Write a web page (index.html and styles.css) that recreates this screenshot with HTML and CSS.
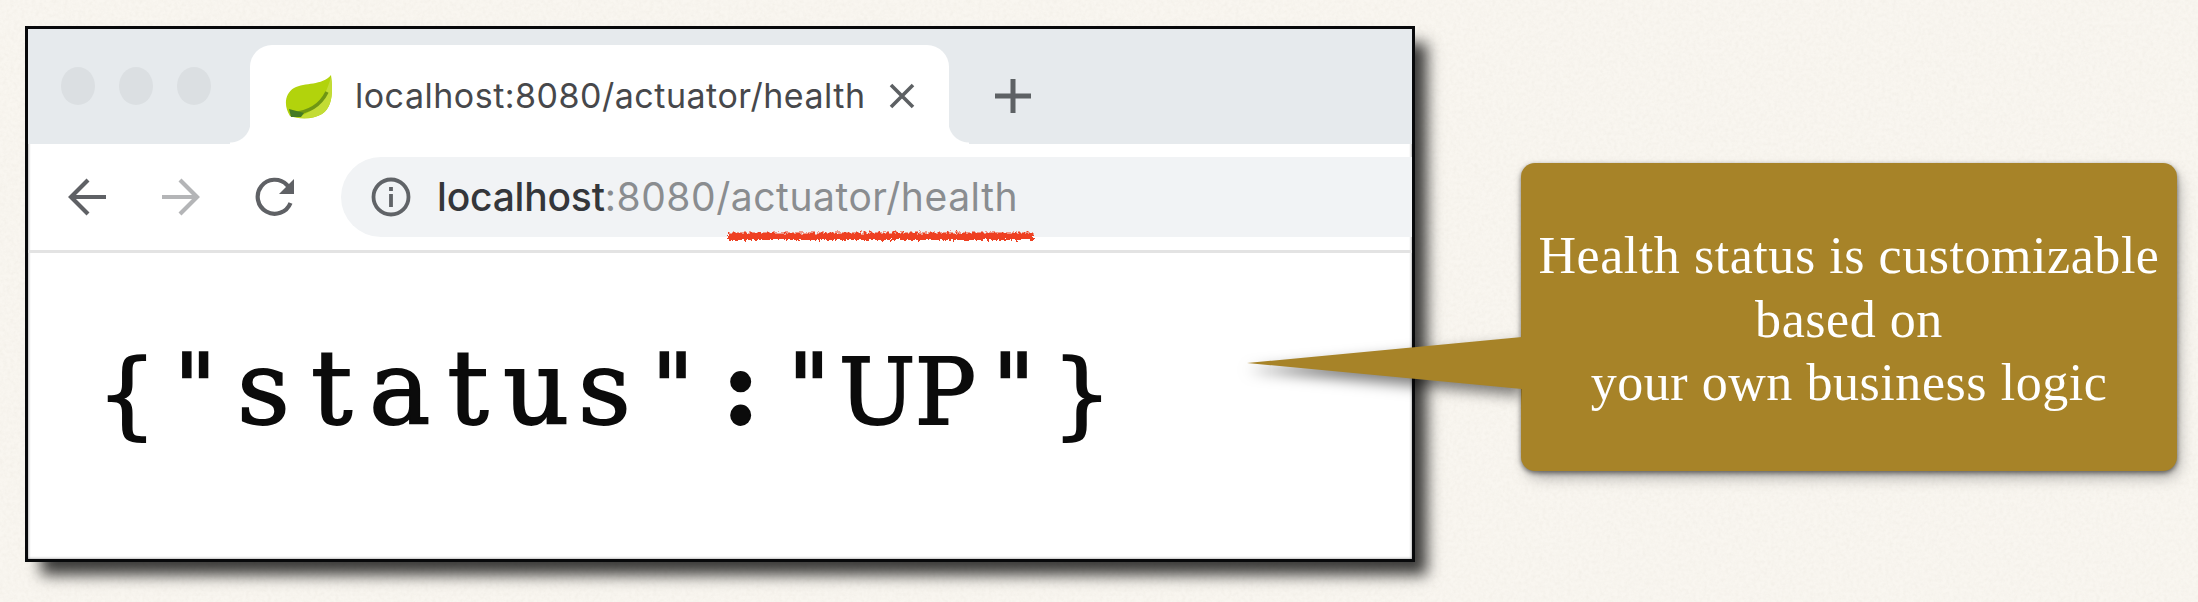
FILE: index.html
```html
<!DOCTYPE html>
<html lang="en">
<head>
<meta charset="utf-8">
<title>Health endpoint</title>
<link rel="stylesheet" href="styles.css">
</head>
<body>
<svg class="paper" width="2198" height="602" aria-hidden="true">
  <filter id="grain" x="0" y="0" width="100%" height="100%">
    <feTurbulence type="fractalNoise" baseFrequency="0.28" numOctaves="3" seed="4"/>
    <feColorMatrix values="0 0 0 0 0.5  0 0 0 0 0.46  0 0 0 0 0.38  0.5 0.3 0 0 -0.3"/>
  </filter>
  <rect width="2198" height="602" filter="url(#grain)" opacity="0.25"/>
</svg>
<main class="slide">
  <section class="browser">
    <header class="tabstrip">
      <div class="lights"><i class="light"></i><i class="light"></i><i class="light"></i></div>
      <div class="tab">
        <svg class="leaf" viewBox="0 0 48 46" width="48" height="46">
          <path d="M46 2C48 17 48 34 37 41C27 47 13 46 5 43C-1 34-1 21 9 15C20 9 37 13 46 2Z" fill="#b2d30c"/>
          <path d="M46 4C48 17 48 34 37 41C30 45 20 46 12 44C28 40 39 29 46 4Z" fill="#c3dc35"/>
          <path d="M7 41C24 39 35 33 42 19" fill="none" stroke="#6f9614" stroke-width="3.5"/>
          <path d="M4 36L19 40L16 44L6 44Z" fill="#447a24"/>
        </svg>
        <span class="tab-title">localhost:8080/actuator/health</span>
        <svg class="close" viewBox="0 0 26 26" width="26" height="26"><path d="M2 2L24 24M24 2L2 24"/></svg>
      </div>
      <svg class="plus" viewBox="0 0 36 36" width="36" height="36"><path d="M0 18H36M18 1V35"/></svg>
    </header>
    <nav class="toolbar">
      <svg class="nav back" viewBox="0 0 40 40" width="40" height="40"><path d="M39 20H4M21 3L4 20L21 37"/></svg>
      <svg class="nav forward" viewBox="0 0 40 40" width="40" height="40"><path d="M1 20H36M19 3L36 20L19 37"/></svg>
      <svg class="nav reload" viewBox="0 0 40 40" width="40" height="40"><path d="M35.500 26A17 17 0 1 1 32 8L36 12"/><path class="head" d="M39 2V17H24Z"/></svg>
      <div class="omnibox">
        <svg class="info" viewBox="0 0 40 40" width="40" height="40"><circle cx="20" cy="20" r="17.500"/><path d="M20 17V30M20 10V14"/></svg>
        <span class="url"><b class="host">localhost</b>:8080/<span class="path">actuator/health</span></span>
        <svg class="underline" viewBox="0 0 308 12" width="308" height="12">
          <filter id="chalk" x="-2%" y="-60%" width="104%" height="220%">
            <feTurbulence type="fractalNoise" baseFrequency="0.35" numOctaves="2" seed="8"/>
            <feDisplacementMap in="SourceGraphic" scale="7" xChannelSelector="R" yChannelSelector="G"/>
          </filter>
          <rect x="1" y="2.500" width="306" height="7.500" fill="#ee4024" filter="url(#chalk)"/>
        </svg>
      </div>
    </nav>
    <div class="page">
      <svg class="json" width="1060" height="130" viewBox="0 0 1060 130">
        <text x="43 111.200 179.400 247.600 315.800 384 452.200 520.400 588.600 656.800 725 793.200 861.400 929.600 997.800" y="97 88 94 94 94 94 94 94 88 94 88 94 94 88 97"><tspan class="brace">{</tspan><tspan class="mark">"</tspan>status<tspan class="mark">"</tspan><tspan class="colon">:</tspan><tspan class="mark">"</tspan><tspan class="caps">UP</tspan><tspan class="mark">"</tspan><tspan class="brace">}</tspan></text>
      </svg>
    </div>
  </section>
  <aside class="callout">
    <svg class="tail" viewBox="0 0 275 52" width="275" height="52"><path d="M0 26L275 0V52Z"/></svg>
    <p class="note">Health status is customizable<br>based on<br>your own business logic</p>
  </aside>
</main>
</body>
</html>
```
FILE: styles.css
```css
* { box-sizing: border-box; }
body { margin: 0; background: #f9f6f0; width: 2198px; height: 602px; overflow: hidden; }
svg { display: block; flex: none; }
.paper { position: absolute; inset: 0; }
.slide { position: relative; display: flex; align-items: flex-start; height: 602px; padding: 26px 21px 0 25px; }

.browser {
  flex: none; display: flex; flex-direction: column;
  width: 1390px; height: 536px;
  border: 3px solid #08090b; background: #fff;
  box-shadow: 14px 15px 14px -2px rgba(0, 0, 0, .76), inset 0 0 3px rgba(0, 0, 0, .5);
  font-family: Inter, Roboto, "Liberation Sans", sans-serif;
}
.tabstrip { display: flex; height: 115px; padding-left: 33px; background: #e6eaed; }
.lights { display: flex; gap: 24px; width: 189px; padding-top: 38px; }
.light { width: 34px; height: 38px; border-radius: 50%; background: #dbdfe2; }
.tab {
  position: relative; display: flex; align-items: center;
  width: 699px; height: 99px; margin-top: 16px; padding: 3px 0 0 35px;
  background: #fff; border-radius: 22px 22px 0 0;
}
.tab::before, .tab::after { content: ""; position: absolute; bottom: 0; width: 20px; height: 22px; }
.tab::before { left: -20px; background: radial-gradient(circle at 0 0, transparent 20px, #fff 21px); }
.tab::after { right: -20px; background: radial-gradient(circle at 100% 0, transparent 20px, #fff 21px); }
.tab-title { width: 515px; margin-left: 22px; font-size: 34px; line-height: 40px; letter-spacing: .5px; color: #47484b; white-space: nowrap; }
.close { margin-left: 19px; fill: none; stroke: #5d6063; stroke-width: 3.6; }
.plus { margin: 49px 0 0 46px; fill: none; stroke: #5d6164; stroke-width: 5; }

.toolbar { display: flex; align-items: center; height: 109px; padding-left: 39px; border-bottom: 3px solid #e3e3e3; }
.nav { fill: none; stroke: #5f6165; stroke-width: 4.2; }
.forward { margin-left: 54px; stroke: #b4b5b7; }
.reload { margin-left: 54px; }
.reload .head { fill: #5f6165; stroke: none; }
.omnibox {
  position: relative; display: flex; align-items: center; flex: 1;
  height: 80px; margin-left: 46px; padding-left: 30px;
  border-radius: 40px 0 0 40px; background: #f1f3f5;
}
.info { fill: none; stroke: #606367; stroke-width: 3.8; }
.url { margin-left: 26px; font-size: 39px; line-height: 46px; letter-spacing: .55px; color: #8a8d90; white-space: nowrap; }
.host { font-weight: 500; letter-spacing: -.2px; color: #34363a; }
.underline { position: absolute; left: 386px; top: 73px; overflow: visible; }

.page { flex: 1; padding: 77px 0 0 56px; }
.json { overflow: visible; }
.json text { font-family: "DejaVu Serif", serif; font-size: 103px; text-anchor: middle; fill: #0b0b0b; stroke: #0b0b0b; stroke-width: 1.8; }
.json .brace { font-size: 94px; stroke-width: 2; }
.json .mark { font-size: 90px; stroke-width: 2.5; }
.json .caps { font-size: 91px; }
.json .colon { font-weight: 700; font-size: 104px; }

.callout {
  position: relative; flex: none; display: flex; align-items: center; justify-content: center;
  width: 656px; height: 308px; margin: 137px 0 0 106px;
  border-radius: 14px; background: #a78328;
  box-shadow: 0 2px 5px rgba(0, 0, 0, .5), 4px 8px 16px -3px rgba(0, 0, 0, .35);
}
.tail { position: absolute; left: -274px; top: 174px; overflow: visible; fill: #a78328; filter: drop-shadow(0 7px 7px rgba(0, 0, 0, .5)); clip-path: inset(-30px 0 -40px -30px); }
.note { position: relative; margin: 0; padding-top: 5px; text-align: center; font-family: "Liberation Serif", serif; font-size: 52px; line-height: 63.5px; letter-spacing: .55px; color: #fff; white-space: nowrap; }
```
